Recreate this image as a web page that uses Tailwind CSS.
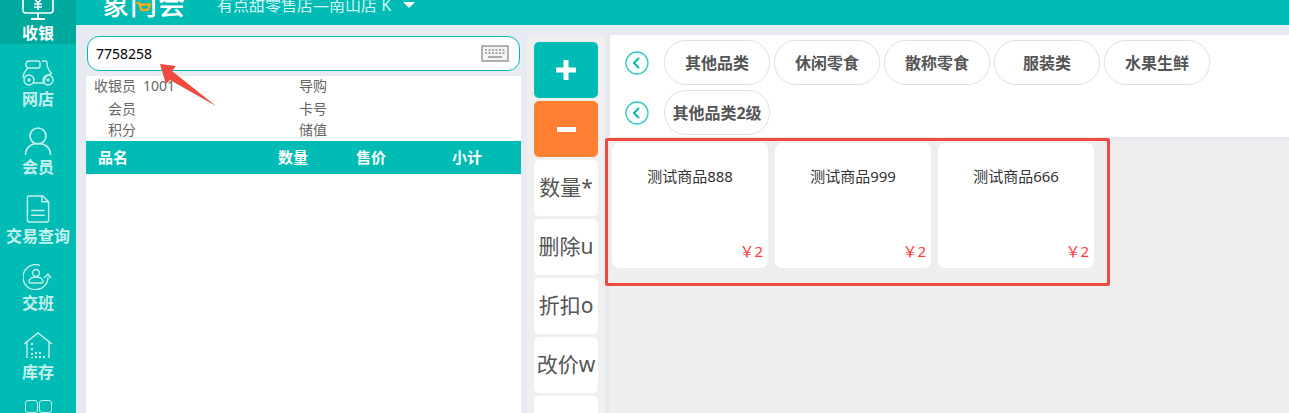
<!DOCTYPE html>
<html lang="en">
<head>
    <meta charset="UTF-8">
    <meta name="viewport" content="width=device-width, initial-scale=1.0">
    <title>收银</title>
    <script src="https://cdn.jsdelivr.net/npm/@tailwindcss/browser@4"></script>
</head>
<body class="h-[413px] overflow-hidden bg-[#e8eaf1] font-['Noto_Sans','Noto_Sans_CJK_SC',sans-serif]">
    <div class="flex h-[413px] relative overflow-hidden">
        <!-- Sidebar -->
        <nav class="w-[76px] shrink-0 bg-[#00bcb4] text-[#c4f0ed] text-[16px] font-bold leading-5 text-center overflow-hidden">
            <div class="h-[68px] -mt-[24px] bg-[#00a99e] pt-[14px] text-white flex flex-col items-center">
                <svg class="w-[32px] h-[32px]" viewBox="0 0 32 32" fill="none" stroke="currentColor" stroke-width="1.6">
                    <rect x="1" y="2" width="30" height="21" rx="3"/>
                    <path d="M16 24v4M9 29h14" stroke-width="2"/>
                    <path d="M11 7l5 6 5-6M16 13v7M12 14h8M12 17h8"/>
                </svg>
                <span class="mt-[1px]">收银</span>
            </div>
            <div class="h-[68px] pt-[15px] flex flex-col items-center">
                <svg class="w-[32px] h-[28px]" viewBox="0 0 32 28" fill="none" stroke="currentColor" stroke-width="1.4">
                    <path d="M7 2h9c1 0 2 1 2 2v3c0 1-1 2-2 2H7C5 9 4 8 4 6V5c0-2 1-3 3-3z"/>
                    <path d="M20 2h4c1 0 1 1 1 2 0 4 2 8 5 11M6 9c-3 3-5 6-5 10M11 24h11c0-4 2-8 7-9"/>
                    <circle cx="7" cy="21" r="5"/><circle cx="7" cy="21" r="1"/>
                    <circle cx="26" cy="21" r="5"/><circle cx="26" cy="21" r="1"/>
                </svg>
                <span class="mt-[2px]">网店</span>
            </div>
            <div class="h-[68px] pt-[15px] flex flex-col items-center">
                <svg class="w-[28px] h-[29px]" viewBox="0 0 28 29" fill="none" stroke="currentColor" stroke-width="1.6">
                    <circle cx="14" cy="9" r="8"/>
                    <path d="M1.5 28c0-7 5-11.500 12.500-11.500S26.500 21 26.500 28"/>
                </svg>
                <span class="mt-[1px]">会员</span>
            </div>
            <div class="h-[68px] pt-[15px] flex flex-col items-center">
                <svg class="w-[24px] h-[28px]" viewBox="0 0 24 29" fill="none" stroke="currentColor" stroke-width="1.500">
                    <path d="M3 1h14l6 6v19c0 1-1 2-2 2H3c-1 0-2-1-2-2V3c0-1 1-2 2-2z"/>
                    <path d="M16 1v6h7M5 16h14M5 21h14"/>
                </svg>
                <span class="whitespace-nowrap mt-[3px]">交易查询</span>
            </div>
            <div class="h-[68px] pt-[16px] flex flex-col items-center">
                <svg class="w-[30px] h-[26px]" viewBox="0 0 30 26" fill="none" stroke="currentColor" stroke-width="1.4">
                    <path d="M17 1.500A12.500 12.500 0 1 0 25 13"/>
                    <path d="M21 14l4-4 3 4"/>
                    <circle cx="13" cy="9" r="3.500"/>
                    <path d="M6 18c0-3 3-5 7-5s7 2 7 5c0 1-1 1-2 1H8c-1 0-2 0-2-1z"/>
                </svg>
                <span class="mt-[3px]">交班</span>
            </div>
            <div class="h-[68px] pt-[16px] flex flex-col items-center">
                <svg class="w-[30px] h-[27px]" viewBox="0 0 30 27" fill="none" stroke="currentColor" stroke-width="1.4">
                    <path d="M1 12L15 1l14 11M4 10v16M26 10v16"/>
                    <path d="M9 11v2M9 16v2M9 21v2M9 25v1M13 20v2M13 24v2M17 20v2M17 24v2M21 24v2" stroke-width="2"/>
                </svg>
                <span class="mt-[3px]">库存</span>
            </div>
            <div class="pt-[16px] flex justify-center gap-[1px]">
                <div class="w-[13px] h-[13px] border-[1.5px] border-current rounded-[3px]"></div>
                <div class="w-[13px] h-[13px] border-[1.5px] border-current rounded-[3px]"></div>
            </div>
        </nav>

        <div class="flex-1 min-w-0 flex flex-col">
            <!-- Header -->
            <header class="h-[25px] shrink-0 bg-[#00bcb4] text-white flex overflow-hidden relative">
                <div class="ml-[26px] w-[90px] -mt-[12px] flex text-[27px] leading-[34px] font-medium tracking-[1px] h-[34px] relative">
                    <span>象</span><span>门</span><span>会</span>
                    <svg class="absolute left-[34px] top-[13px] w-[16px] h-[15px]" viewBox="0 0 24 20" fill="none" stroke="#ffa914" stroke-width="3.500">
                        <path d="M1 2h4l3 10h10l3-8H6"/>
                    </svg>
                </div>
                <div class="ml-[25px] -mt-[7px] h-[24px] text-[16px] leading-[24px] text-[#d6f6f4] whitespace-nowrap">有点甜零售店—南山店 K</div>
                <div class="ml-[12px] mt-[2px] w-0 h-0 border-x-[6px] border-x-transparent border-t-[6px] border-t-white"></div>
            </header>

            <div class="flex-1 min-h-0 flex pt-[10px]">
                <!-- Left: scan box and order table -->
                <div class="ml-[10px] w-[435px] shrink-0 flex flex-col">
                    <div class="mx-[1px] mt-[1px] h-[35px] shrink-0 bg-white border border-[#00bcb4] rounded-xl flex items-center justify-between pl-[8px] pr-[10px]">
                        <span class="text-[14px] text-black">7758258</span>
                        <svg class="w-[28px] h-[17px]" viewBox="0 0 28 17" fill="none">
                            <rect x="1" y="1" width="26" height="15" fill="#f4f4f4" stroke="#999" stroke-width="1.500"/>
                            <path d="M4 5h20M4 8h20" stroke="#aaa" stroke-width="2" stroke-dasharray="2 1.500"/>
                            <path d="M7 12h14" stroke="#aaa" stroke-width="2"/>
                        </svg>
                    </div>
                    <div class="mt-[5px] h-[65px] shrink-0 bg-white text-[14px] leading-[19px] text-[#666] grid grid-cols-[213px_1fr] grid-rows-[20px_22px_21px] content-start">
                        <div class="pl-[8px] flex gap-[7px]"><span>收银员</span><span>1001</span></div>
                        <div>导购</div>
                        <div class="pl-[22px] self-end">会员</div>
                        <div class="self-end">卡号</div>
                        <div class="pl-[22px] self-end">积分</div>
                        <div class="self-end">储值</div>
                    </div>
                    <div class="h-[33px] shrink-0 bg-[#00bcb4] text-white text-[15px] font-bold flex items-center">
                        <span class="ml-[12px] w-[180px]">品名</span>
                        <span class="w-[78px]">数量</span>
                        <span class="w-[96px]">售价</span>
                        <span>小计</span>
                    </div>
                    <div class="flex-1 bg-white"></div>
                </div>

                <!-- Action buttons -->
                <div class="ml-[6px] w-[78px] shrink-0 bg-[#efefef] px-[7px] pt-[7px] flex flex-col gap-[3px] overflow-hidden">
                    <div class="h-[56px] shrink-0 rounded-[5px] bg-[#00bcb4] flex items-center justify-center">
                        <svg class="w-[20px] h-[20px]" viewBox="0 0 20 20" fill="white"><path d="M7.500 0h5v7.500H20v5h-7.500V20h-5v-7.500H0v-5h7.500z"/></svg>
                    </div>
                    <div class="h-[56px] shrink-0 rounded-[5px] bg-[#ff8033] flex items-center justify-center">
                        <div class="w-[19px] h-[5px] bg-white"></div>
                    </div>
                    <div class="h-[56px] shrink-0 rounded-[5px] bg-white flex items-center justify-center text-[21px] text-[#555] whitespace-nowrap">数量*</div>
                    <div class="h-[56px] shrink-0 rounded-[5px] bg-white flex items-center justify-center text-[21px] text-[#555] whitespace-nowrap">删除u</div>
                    <div class="h-[56px] shrink-0 rounded-[5px] bg-white flex items-center justify-center text-[21px] text-[#555] whitespace-nowrap">折扣o</div>
                    <div class="h-[56px] shrink-0 rounded-[5px] bg-white flex items-center justify-center text-[21px] text-[#555] whitespace-nowrap">改价w</div>
                    <div class="h-[56px] shrink-0 rounded-[5px] bg-white"></div>
                </div>

                <!-- Right: categories and products -->
                <div class="ml-[5px] flex-1 min-w-0 flex flex-col">
                    <div class="h-[102px] shrink-0 bg-white pt-[5px] pl-[15px] flex flex-col gap-[5px] text-[16px] font-bold text-[#555]">
                        <div class="flex items-center h-[45px]">
                            <svg class="w-[24px] h-[24px] shrink-0 mr-[15px]" viewBox="0 0 24 24" fill="none"><circle cx="12" cy="12" r="11" stroke="#2fc9c2" stroke-width="1.300"/><path d="M14 7l-5 5 5 5" stroke="#00bcb4" stroke-width="2"/></svg>
                            <div class="flex gap-[4px]">
                                <span class="w-[106px] h-[45px] rounded-[22px] border border-[#e0e0e0] flex items-center justify-center">其他品类</span>
                                <span class="w-[106px] h-[45px] rounded-[22px] border border-[#e0e0e0] flex items-center justify-center">休闲零食</span>
                                <span class="w-[106px] h-[45px] rounded-[22px] border border-[#e0e0e0] flex items-center justify-center">散称零食</span>
                                <span class="w-[106px] h-[45px] rounded-[22px] border border-[#e0e0e0] flex items-center justify-center">服装类</span>
                                <span class="w-[106px] h-[45px] rounded-[22px] border border-[#e0e0e0] flex items-center justify-center">水果生鲜</span>
                            </div>
                        </div>
                        <div class="flex items-center h-[45px]">
                            <svg class="w-[24px] h-[24px] shrink-0 mr-[15px]" viewBox="0 0 24 24" fill="none"><circle cx="12" cy="12" r="11" stroke="#2fc9c2" stroke-width="1.300"/><path d="M14 7l-5 5 5 5" stroke="#00bcb4" stroke-width="2"/></svg>
                            <span class="w-[106px] h-[45px] rounded-[22px] border border-[#e0e0e0] flex items-center justify-center whitespace-nowrap">其他品类2级</span>
                        </div>
                    </div>
                    <div class="mt-[4px] flex-1 bg-[#eeeeee] pt-[2px] pl-[2px] flex gap-[7px] items-start">
                        <div class="w-[156px] h-[125px] rounded-[7px] bg-white pt-[22px] pr-[5px] pb-[7px] flex flex-col justify-between">
                            <div class="pl-[5px] text-center text-[15px] text-[#333]">测试商品888</div>
                            <div class="text-right text-[15px] leading-5 text-[#ff3b3b]">￥2</div>
                        </div>
                        <div class="w-[156px] h-[125px] rounded-[7px] bg-white pt-[22px] pr-[5px] pb-[7px] flex flex-col justify-between">
                            <div class="pl-[5px] text-center text-[15px] text-[#333]">测试商品999</div>
                            <div class="text-right text-[15px] leading-5 text-[#ff3b3b]">￥2</div>
                        </div>
                        <div class="w-[156px] h-[125px] rounded-[7px] bg-white pt-[22px] pr-[5px] pb-[7px] flex flex-col justify-between">
                            <div class="pl-[5px] text-center text-[15px] text-[#333]">测试商品666</div>
                            <div class="text-right text-[15px] leading-5 text-[#ff3b3b]">￥2</div>
                        </div>
                    </div>
                </div>
            </div>
        </div>

        <!-- Screenshot annotations -->
        <svg class="absolute left-[155px] top-[58px] w-[65px] h-[52px]" viewBox="0 0 65 52" fill="#ef4a3f">
            <path d="M5 6l16 2-4 5 44 35-46-26-4 4z"/>
        </svg>
        <div class="absolute left-[605px] top-[138px] w-[505px] h-[148px] border-[3px] border-[#ef4a3f] rounded-[2px]"></div>
    </div>
</body>
</html>
